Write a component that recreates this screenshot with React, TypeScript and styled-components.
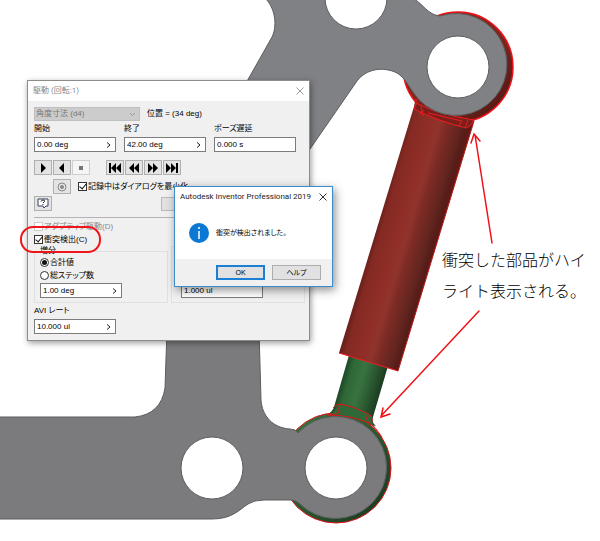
import React, { useState } from "react";
import styled, { createGlobalStyle } from "styled-components";

const GlobalStyle = createGlobalStyle`
  * { box-sizing: border-box; }
  body {
    margin: 0;
    background: #fff;
    color: #000;
    font-family: "Liberation Sans", "Noto Sans CJK JP", sans-serif;
    overflow: hidden;
  }
  button, input, select { font: inherit; color: inherit; margin: 0; border-radius: 0; }
`;

const Stage = styled.main`
  position: relative;
  min-height: 100vh;
  overflow: hidden;
`;

const Drawing = styled.svg`
  position: absolute;
  left: 0;
  top: 0;
`;

const Overlay = styled(Drawing)`
  pointer-events: none;
`;

const Note = styled.p`
  position: absolute;
  left: 442px;
  top: 244px;
  margin: 0;
  font-family: "Noto Sans CJK JP", sans-serif;
  font-weight: 300;
  font-size: 16px;
  line-height: 31px;
  color: #000;
  white-space: nowrap;
`;

const Window = styled.section`
  position: absolute;
  left: 27px;
  top: 80px;
  width: 283px;
  border: 1px solid #8c8c8c;
  background: #f0f0f0;
  box-shadow: 1px 2px 6px rgba(0, 0, 0, 0.4);
  font-size: 8px;
  line-height: 12px;
  font-feature-settings: "palt";
  white-space: nowrap;
`;

const Alert = styled(Window)`
  left: 174px;
  top: 186px;
  width: 159px;
  border-color: #3a8ccb;
  background: #fff;
  box-shadow: 2px 3px 9px rgba(0, 0, 0, 0.45);
  font-size: 7px;
`;

const TitleBar = styled.header<{ $muted?: boolean }>`
  display: flex;
  align-items: center;
  justify-content: space-between;
  height: 20px;
  padding: 0 5px;
  background: #fff;
  color: ${(p) => (p.$muted ? "#8b8b8b" : "#222")};
`;

const Title = styled.h1`
  margin: 0;
  font-weight: 400;
  font-size: 8px;
  font-family: Roboto, "Noto Sans CJK JP", sans-serif;
`;

const CloseButton = styled.button`
  display: flex;
  padding: 0;
  border: 0;
  background: none;
`;

const Body = styled.div`
  display: flex;
  flex-direction: column;
  padding: 6px;
`;

const Row = styled.div<{ $gap?: number; $top?: number; $indent?: number }>`
  display: flex;
  align-items: center;
  gap: ${(p) => p.$gap ?? 0}px;
  margin-top: ${(p) => p.$top ?? 0}px;
  padding-left: ${(p) => p.$indent ?? 0}px;
`;

const SelectWrap = styled.div`
  display: grid;
  align-items: center;
  width: 106px;
  height: 14px;
  background: #ccc;
  border: 1px solid #bfbfbf;
  & > * { grid-area: 1 / 1; }
  & > svg { justify-self: end; margin-right: 3px; }
`;

const Select = styled.select`
  appearance: none;
  width: 100%;
  height: 12px;
  padding: 0 1px;
  border: 0;
  background: none;
  color: #777;
  opacity: 1;
`;

const Columns = styled.div`
  display: grid;
  grid-template-columns: repeat(3, 82px);
  gap: 8px;
`;

const Field = styled.div`
  display: flex;
  flex-direction: column;
`;

const FieldLabel = styled.label`
  height: 16px;
  line-height: 16px;
`;

const Box = styled.div`
  display: flex;
  align-items: center;
  width: 82px;
  height: 15px;
  border: 1px solid #7c7c7c;
  background: #fff;
`;

const TextInput = styled.input`
  flex: 1;
  min-width: 0;
  height: 13px;
  padding: 0 2px;
  border: 0;
  background: none;
  outline: 0;
`;

const MoreButton = styled.button`
  display: flex;
  padding: 0 4px;
  border: 0;
  background: none;
`;

const ToolButton = styled.button<{ $off?: boolean }>`
  display: flex;
  align-items: center;
  justify-content: center;
  width: 18px;
  height: 15px;
  padding: 0;
  border: 1px solid ${(p) => (p.$off ? "#cfcfcf" : "#b0b0b0")};
  background: ${(p) => (p.$off ? "#f5f5f5" : "#e4e4e4")};
`;

const ToolGroup = styled.div`
  display: flex;
  gap: 1px;
`;

const WideButton = styled.button`
  width: 58px;
  height: 14px;
  border: 1px solid #b8b8b8;
  background: #e1e1e1;
`;

const Divider = styled.hr`
  width: 100%;
  height: 1px;
  margin: 6px 0 2px;
  border: 0;
  background: #b4b4b4;
`;

const Choice = styled.label<{ $off?: boolean }>`
  display: flex;
  align-items: center;
  gap: 1px;
  height: 13px;
  color: ${(p) => (p.$off ? "#8a8a8a" : "#000")};
`;

const Mark = styled.input<{ $off?: boolean }>`
  appearance: none;
  display: grid;
  place-items: center;
  width: 9px;
  height: 9px;
  border: 1px solid ${(p) => (p.$off ? "#ccc" : "#333")};
  background: #fff;
  &[type="checkbox"]:checked::before {
    content: "";
    width: 3px;
    height: 6px;
    border: solid #111;
    border-width: 0 1px 1px 0;
    transform: rotate(40deg);
    margin-top: -2px;
  }
  &[type="radio"] { border-radius: 50%; }
  &[type="radio"]:checked::before {
    content: "";
    width: 5px;
    height: 5px;
    border-radius: 50%;
    background: #111;
  }
`;

const Groups = styled.div`
  display: grid;
  grid-template-columns: 134px 134px;
  gap: 3px;
`;

const Group = styled.fieldset`
  display: flex;
  flex-direction: column;
  justify-content: flex-end;
  min-width: 0;
  margin: 0;
  padding: 0 5px 4px;
  border: 1px solid #e0e0e0;
`;

const Legend = styled.legend`
  height: 10px;
  padding: 0;
  line-height: 10px;
`;

const Message = styled.div`
  display: flex;
  align-items: center;
  gap: 7px;
  height: 52px;
  padding-left: 14px;
`;

const Footer = styled.footer`
  display: flex;
  justify-content: flex-end;
  gap: 7px;
  padding: 6px 11px;
  background: #f0f0f0;
`;

const PushButton = styled.button<{ $primary?: boolean }>`
  width: 49px;
  height: 15px;
  padding: 0;
  line-height: 11px;
  border: ${(p) => (p.$primary ? "2px solid #1c7fd6" : "1px solid #adadad")};
  background: #e1e1e1;
`;

function Cross({ color }: { color: string }) {
  return (
    <svg width="8" height="8" viewBox="0 0 8 8">
      <path d="M.5 .5 7.5 7.5M7.5 .5.5 7.5" stroke={color} fill="none" />
    </svg>
  );
}

function Glyph({ d, width = 12 }: { d: string; width?: number }) {
  return (
    <svg width={width} height="10" viewBox={`0 0 ${width} 10`}>
      <path d={d} fill="#000" />
    </svg>
  );
}

function ValueField({ id, value, label, more }: { id: string; value: string; label?: string; more?: boolean }) {
  return (
    <Field>
      {label && <FieldLabel htmlFor={id}>{label}</FieldLabel>}
      <Box>
        <TextInput id={id} defaultValue={value} aria-label={label ?? id} />
        {more && (
          <MoreButton aria-label="その他">
            <svg width="5" height="6" viewBox="0 0 5 6">
              <path d="M1 .5 4 3 1 5.500" stroke="#222" fill="none" />
            </svg>
          </MoreButton>
        )}
      </Box>
    </Field>
  );
}

const PLATE_LINE = "#5c5d5f";

function Linkage() {
  return (
    <Drawing width="600" height="541" viewBox="0 0 600 541" aria-hidden="true">
      <defs>
        <linearGradient id="tube" gradientUnits="userSpaceOnUse" x1="370" y1="252" x2="432" y2="270">
          <stop offset="0" stopColor="#6d211c" />
          <stop offset=".08" stopColor="#842a23" />
          <stop offset=".35" stopColor="#902e27" />
          <stop offset=".48" stopColor="#8f342c" />
          <stop offset=".6" stopColor="#7d2a24" />
          <stop offset=".78" stopColor="#642620" />
          <stop offset=".9" stopColor="#561c18" />
          <stop offset="1" stopColor="#6e1714" />
        </linearGradient>
        <linearGradient id="rod" gradientUnits="userSpaceOnUse" x1="342" y1="382" x2="380" y2="393">
          <stop offset="0" stopColor="#214b27" />
          <stop offset=".15" stopColor="#2f6737" />
          <stop offset=".45" stopColor="#397341" />
          <stop offset=".65" stopColor="#2f6136" />
          <stop offset="1" stopColor="#1c3c21" />
        </linearGradient>
        <linearGradient id="ringRed" x1="0" y1="0" x2="1" y2="1">
          <stop offset="0" stopColor="#962c24" />
          <stop offset=".6" stopColor="#7c241e" />
          <stop offset="1" stopColor="#451512" />
        </linearGradient>
        <linearGradient id="ringGreen" x1="0" y1="0" x2="1" y2="1">
          <stop offset="0" stopColor="#39783f" />
          <stop offset=".5" stopColor="#2b5b31" />
          <stop offset="1" stopColor="#17331b" />
        </linearGradient>
      </defs>

      <path d="M349 355 334 407Q333 411 327 415L376 426Q371 422 373 417L388 366Z" fill="url(#rod)" />
      <circle cx="336" cy="468" r="55" fill="url(#ringGreen)" stroke="#e3121b" />
      <path d="M331 414Q337 409 338 404L349 405Q362 409 372 416Q370 421 375 427Q352 413 331 414Z" fill="#2f6937" />
      <path
        d="M333 408Q336 404 341 404Q356 407 370 415Q373 418 372 422M341 404Q338 406 339 412Q336 415 328 415Q350 415 369 423M368 414Q365 419 369 423Q376 427 382 437"
        stroke="#e3121b"
        fill="none"
      />

      <path d="M416 100 339 353 398 371 474 121Z" fill="url(#tube)" />
      <path d="M339 353 398 371" stroke="#ef1b20" />
      <path d="M398 371 474 121" stroke="#b51a1a" />
      <circle cx="458" cy="67" r="55" fill="url(#ringRed)" stroke="#ee1119" strokeWidth="1.500" />
      <path d="M415 101 474 121 468 127Q440 122 414 109Z" fill="#7a1f1a" />
      <path
        d="M416 99Q417 106 414 109Q440 122 466 128Q471 127 474 120M421 106 423 116M428 113 462 121 459 126M416 103Q440 115 474 120M468 120 465 128M424 110 419 114"
        stroke="#ef1b20"
        fill="none"
      />

      <path
        d="M266-1C276 10 277 27 272 37L180 200 290 178 357 81C366 69 383 66 397 73C405 78 408 85 413 92A51 51 0 1 0 440 16C428 15 423 4 414-1Z"
        fill="#808184"
        stroke={PLATE_LINE}
      />
      <path
        d="M167 330 165 388Q161 414 135 417H-1V519H212C232 519 239 510 248 504Q254 500 264 500H290C294 500 296 501 299 503A51 51 0 1 0 298 433Q296 429 290 429C273 428 262 416 261 400L259 330Z"
        fill="#7b7b7e"
        stroke={PLATE_LINE}
      />
      <g fill="#fff" stroke={PLATE_LINE}>
        <circle cx="356" cy="-2" r="31" />
        <circle cx="458" cy="67" r="31" />
        <circle cx="212" cy="468" r="31" />
        <circle cx="336" cy="468" r="31" />
      </g>
    </Drawing>
  );
}

function Callouts() {
  return (
    <Overlay width="600" height="541" viewBox="0 0 600 541" aria-hidden="true">
      <g fill="none" stroke="#f01218" strokeWidth="1.500" strokeLinecap="round">
        <path d="M492 243 475 135M471 143 474 134 480 141" />
        <path d="M479 311 381 416M383 408 381 417 390 414" />
      </g>
    </Overlay>
  );
}

function CircledOption() {
  return (
    <Overlay width="110" height="260" viewBox="0 0 110 260" aria-hidden="true">
      <rect x="21" y="227" width="79" height="25" rx="12" fill="none" stroke="#ee151b" strokeWidth="2" />
    </Overlay>
  );
}

export default function App() {
  const [mode, setMode] = useState("total");
  return (
    <Stage>
      <GlobalStyle />
      <Linkage />

      <Window aria-label="駆動">
        <TitleBar $muted>
          <Title>駆動 (回転:1)</Title>
          <CloseButton aria-label="閉じる"><Cross color="#999" /></CloseButton>
        </TitleBar>
        <Body>
          <Row $gap={7}>
            <SelectWrap>
              <Select disabled aria-label="拘束">
                <option>角度寸法 (d4)</option>
              </Select>
              <svg width="7" height="5" viewBox="0 0 7 5">
                <path d="M1 1 3.500 3.500 6 1" stroke="#999" fill="none" />
              </svg>
            </SelectWrap>
            <span>位置 = (34 deg)</span>
          </Row>
          <Columns>
            <ValueField id="start" label="開始" value="0.00 deg" more />
            <ValueField id="end" label="終了" value="42.00 deg" more />
            <ValueField id="pause" label="ポーズ遅延" value="0.000 s" />
          </Columns>
          <Row $top={8} $gap={16}>
            <ToolGroup>
              <ToolButton aria-label="順方向"><Glyph d="M4 0 9 5 4 10Z" /></ToolButton>
              <ToolButton aria-label="逆方向"><Glyph d="M8 0 3 5 8 10Z" /></ToolButton>
              <ToolButton $off disabled aria-label="停止">
                <svg width="4" height="4" viewBox="0 0 4 4"><path d="M0 0H4V4H0Z" fill="#777" /></svg>
              </ToolButton>
            </ToolGroup>
            <ToolGroup>
              <ToolButton aria-label="最初"><Glyph d="M0 0H2V10H0ZM7 0V10L2 5ZM12 0V10L7 5Z" /></ToolButton>
              <ToolButton aria-label="戻る"><Glyph d="M6 0V10L1 5ZM11 0V10L6 5Z" /></ToolButton>
              <ToolButton aria-label="進む"><Glyph d="M1 0V10L6 5ZM6 0V10L11 5Z" /></ToolButton>
              <ToolButton aria-label="最後"><Glyph d="M10 0H12V10H10ZM0 0V10L5 5ZM5 0V10L10 5Z" /></ToolButton>
            </ToolGroup>
          </Row>
          <Row $top={4} $gap={7} $indent={19}>
            <ToolButton aria-label="記録">
              <svg width="10" height="10" viewBox="0 0 10 10">
                <circle cx="5" cy="5" r="4" stroke="#888" fill="none" />
                <circle cx="5" cy="5" r="2" fill="#888" />
              </svg>
            </ToolButton>
            <Choice>
              <Mark type="checkbox" defaultChecked />
              記録中はダイアログを最小化
            </Choice>
          </Row>
          <Row $top={2} $gap={109}>
            <ToolButton aria-label="ヘルプ">
              <svg width="12" height="11" viewBox="0 0 12 11">
                <path d="M1 1H11V8H9L7 10 6 8H1Z" fill="#fff" stroke="#35415c" />
                <path d="M4 3.500Q4.500 2 6 2Q8 2 7.500 3.500L6 5M6 6V7" stroke="#222" fill="none" />
              </svg>
            </ToolButton>
            <WideButton aria-label="OK" />
          </Row>
          <Divider />
          <Choice $off>
            <Mark type="checkbox" disabled $off />
            アダプティブ駆動(D)
          </Choice>
          <Choice>
            <Mark type="checkbox" defaultChecked />
            衝突検出(C)
          </Choice>
          <Groups>
            <Group>
              <Legend>増分</Legend>
              <Choice>
                <Mark type="radio" name="mode" checked={mode === "total"} onChange={() => setMode("total")} />
                合計値
              </Choice>
              <Choice>
                <Mark type="radio" name="mode" checked={mode === "steps"} onChange={() => setMode("steps")} />
                総ステップ数
              </Choice>
              <Row $top={1}>
                <ValueField id="increment" value="1.00 deg" more />
              </Row>
            </Group>
            <Group>
              <Row $indent={4}>
                <ValueField id="repeat" value="1.000 ul" />
              </Row>
            </Group>
          </Groups>
          <ValueField id="avi" label="AVI レート" value="10.000 ul" more />
        </Body>
      </Window>

      <CircledOption />

      <Alert role="alertdialog" aria-label="Autodesk Inventor Professional 2019">
        <TitleBar>
          <Title>Autodesk Inventor Professional 2019</Title>
          <CloseButton aria-label="閉じる"><Cross color="#333" /></CloseButton>
        </TitleBar>
        <Message>
          <svg width="20" height="20" viewBox="0 0 20 20" aria-hidden="true">
            <circle cx="10" cy="10" r="10" fill="#0b78d4" />
            <path d="M10 8V16M10 4V6" stroke="#fff" strokeWidth="1.500" />
          </svg>
          <span>衝突が検出されました。</span>
        </Message>
        <Footer>
          <PushButton $primary>OK</PushButton>
          <PushButton>ヘルプ</PushButton>
        </Footer>
      </Alert>

      <Note>衝突した部品がハイ<br />ライト表示される。</Note>
      <Callouts />
    </Stage>
  );
}
